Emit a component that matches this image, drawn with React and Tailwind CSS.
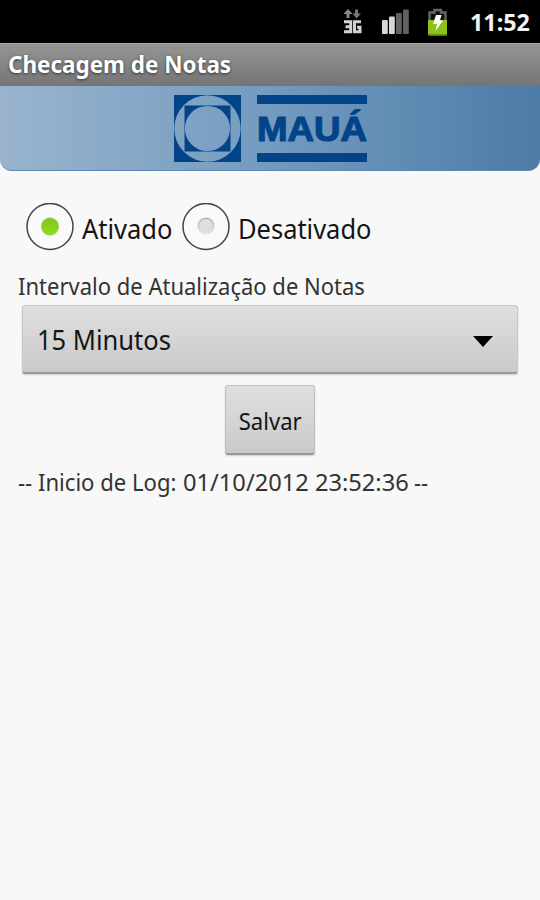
import React from 'react';

function StatusBar() {
  return (
    <div className="h-[43px] bg-black flex items-center justify-end pr-[10px]">
      {/* 3G */}
      <svg className="w-[20px] h-[26px] mr-[19px]" viewBox="0 0 20 26">
        <path d="M5 0 L9.5 5 H6.5 V9 H3.5 V5 H0.5 Z" fill="#888" />
        <path d="M13.5 9.5 L9.5 4.5 H12 V0.5 H15 V4.5 H18 Z" fill="#777" />
        <path
          d="M1 12.8 H7.7 V22.8 H1 M2.5 17.8 H8 M18 12.8 H11.5 V22.8 H17 V18.3 H14"
          fill="none"
          stroke="#d2d2d2"
          strokeWidth="3"
        />
      </svg>
      {/* Sinal */}
      <svg className="w-[28px] h-[26px] mr-[18px]" viewBox="0 0 28 26">
        <rect x="0" y="11" width="5.8" height="14" rx="1" fill="#d6d6d6" />
        <rect x="7" y="7.5" width="5.8" height="17.5" rx="1" fill="#d6d6d6" />
        <rect x="14" y="4" width="5.8" height="21" rx="1" fill="#626262" />
        <rect x="21" y="0.5" width="5.8" height="24.5" rx="1" fill="#626262" />
      </svg>
      {/* Bateria */}
      <svg className="w-[20px] h-[28px] mr-[22px]" viewBox="0 0 20 28">
        <path d="M1.5 12 V4.5 H6.5 V2 H13 V4.5 H17.5 V12" fill="#111" stroke="#666" strokeWidth="2.4" />
        <path d="M0 12 H19 V26 Q19 27.5 17.5 27.5 H1.5 Q0 27.5 0 26 Z" fill="#8cc218" />
        <path d="M0 26 H19 Q19 27.5 17.5 27.5 H1.5 Q0 27.5 0 26 Z" fill="#659608" />
        <path d="M8 7 H13.5 L12 12.5 H15 L7.5 23 L9 16 H5 Z" fill="#fff" />
      </svg>
      <span className="text-[24px] leading-[30px] font-bold text-[#f4f4f4] w-[60px] whitespace-nowrap origin-left scale-x-[0.97]">
        11:52
      </span>
    </div>
  );
}

function Logo() {
  return (
    <svg className="w-[196px] h-[70px]" viewBox="0 0 196 70">
      <g fill="#034489">
        <path
          fillRule="evenodd"
          d="M1 1 H68 V68 H1 Z M34.5 1.3 A33.2 33.2 0 1 0 34.5 67.7 A33.2 33.2 0 1 0 34.5 1.3 Z"
        />
        <path
          fillRule="evenodd"
          d="M11.5 11.5 H57.5 V57.5 H11.5 Z M34.5 11.9 A22.6 22.6 0 1 0 34.5 57.1 A22.6 22.6 0 1 0 34.5 11.9 Z"
        />
        <rect x="84" y="1" width="110" height="9" />
        <rect x="84" y="59" width="110" height="9" />
        <text
          x="84"
          y="46.5"
          textLength="110"
          lengthAdjust="spacingAndGlyphs"
          className="font-['Liberation_Sans',sans-serif] font-bold text-[34.5px]"
          stroke="#034489"
          strokeWidth="1.2"
        >
          MAUÁ
        </text>
      </g>
    </svg>
  );
}

function Radio({ checked }) {
  return (
    <svg className="w-[48px] h-[48px]" viewBox="0 0 48 48">
      <defs>
        <linearGradient id="ligado" x1="0" y1="0" x2="0" y2="1">
          <stop offset="0" stopColor="#7fc61a" />
          <stop offset="1" stopColor="#8fdc1c" />
        </linearGradient>
        <linearGradient id="desligado" x1="0" y1="0" x2="0" y2="1">
          <stop offset="0" stopColor="#b0b0b0" />
          <stop offset="1" stopColor="#e6e6e6" />
        </linearGradient>
      </defs>
      <circle cx="24" cy="23.5" r="23" fill="#fafafa" stroke="#444" strokeWidth="1.5" />
      {checked ? (
        <circle cx="24" cy="23.5" r="8.7" fill="url(#ligado)" stroke="#a3c973" strokeWidth="0.8" />
      ) : (
        <circle cx="24" cy="23" r="7.8" fill="#dedede" stroke="url(#desligado)" strokeWidth="1.6" />
      )}
    </svg>
  );
}

function App() {
  return (
    <div className="w-[540px] h-[900px] bg-[#f8f8f8] overflow-hidden font-['Noto_Sans',sans-serif] text-[#151515]">
      <StatusBar />
      <div className="h-[43px] bg-linear-to-b from-[#959595] to-[#757575] border-t border-[#a5a5a5] pl-[8px] pb-[3px] flex items-center">
        <h1 className="text-[23px] leading-[30px] font-bold text-white whitespace-nowrap origin-left scale-x-[0.977] [text-shadow:0_1px_3px_#333]">
          Checagem de Notas
        </h1>
      </div>
      <div className="h-[85px] rounded-b-[12px] bg-linear-to-r from-[#9ab4ce] via-[#739bc0] to-[#4c7ba6] border-b border-[#5c87b0] pl-[173px] pt-[8px]">
        <Logo />
      </div>

      {/* Opciones */}
      <div className="flex items-center h-[48px] mt-[32px] pl-[26px] text-[27px]">
        <Radio checked />
        <span className="ml-[8px] mt-[4px] w-[100px] whitespace-nowrap origin-left scale-x-[0.945]">Ativado</span>
        <Radio />
        <span className="ml-[8px] mt-[4px] whitespace-nowrap origin-left scale-x-[0.943]">Desativado</span>
      </div>

      <p className="mt-[19px] ml-[18px] h-[35px] leading-[32px] text-[24px] text-[#333] whitespace-nowrap origin-left scale-x-[0.917]">
        Intervalo de Atualização de Notas
      </p>
      <div className="ml-[22px] w-[496px] h-[69px] rounded-[3px] bg-linear-to-b from-[#dfdfdf] to-[#c9cac9] border border-[#c8c8c8] border-b-2 border-b-[#999] flex items-center justify-between pl-[14px] pr-[24px] shadow-[0_1px_2px_#ccc]">
        <span className="mt-[2px] text-[27px] whitespace-nowrap origin-left scale-x-[0.945]">15 Minutos</span>
        <svg className="w-[20px] h-[11px] mt-[5px]" viewBox="0 0 20 11">
          <path d="M0 0 H20 L10 11 Z" fill="#000" />
        </svg>
      </div>
      <div className="flex justify-center mt-[11px]">
        <button className="w-[90px] h-[70px] rounded-[3px] bg-linear-to-b from-[#dfdfdf] to-[#c9cac9] border border-[#c0c0c0] border-b-2 border-b-[#999] shadow-[0_1px_2px_#ccc] text-[24px] flex items-center justify-center">
          <span className="mt-[3px] scale-x-[0.92]">Salvar</span>
        </button>
      </div>
      <p className="flex mt-[10px] pl-[18px] leading-[33px] text-[24px] text-[#333] whitespace-nowrap">
        <span className="w-[165px] origin-left scale-x-[0.92]">-- Inicio de Log:</span>
        <span className="w-[225px] origin-left scale-x-[0.985]">01/10/2012 23:52:36</span>
        <span className="ml-[6px] origin-left scale-x-[0.92]">--</span>
      </p>
    </div>
  );
}

export default App;
